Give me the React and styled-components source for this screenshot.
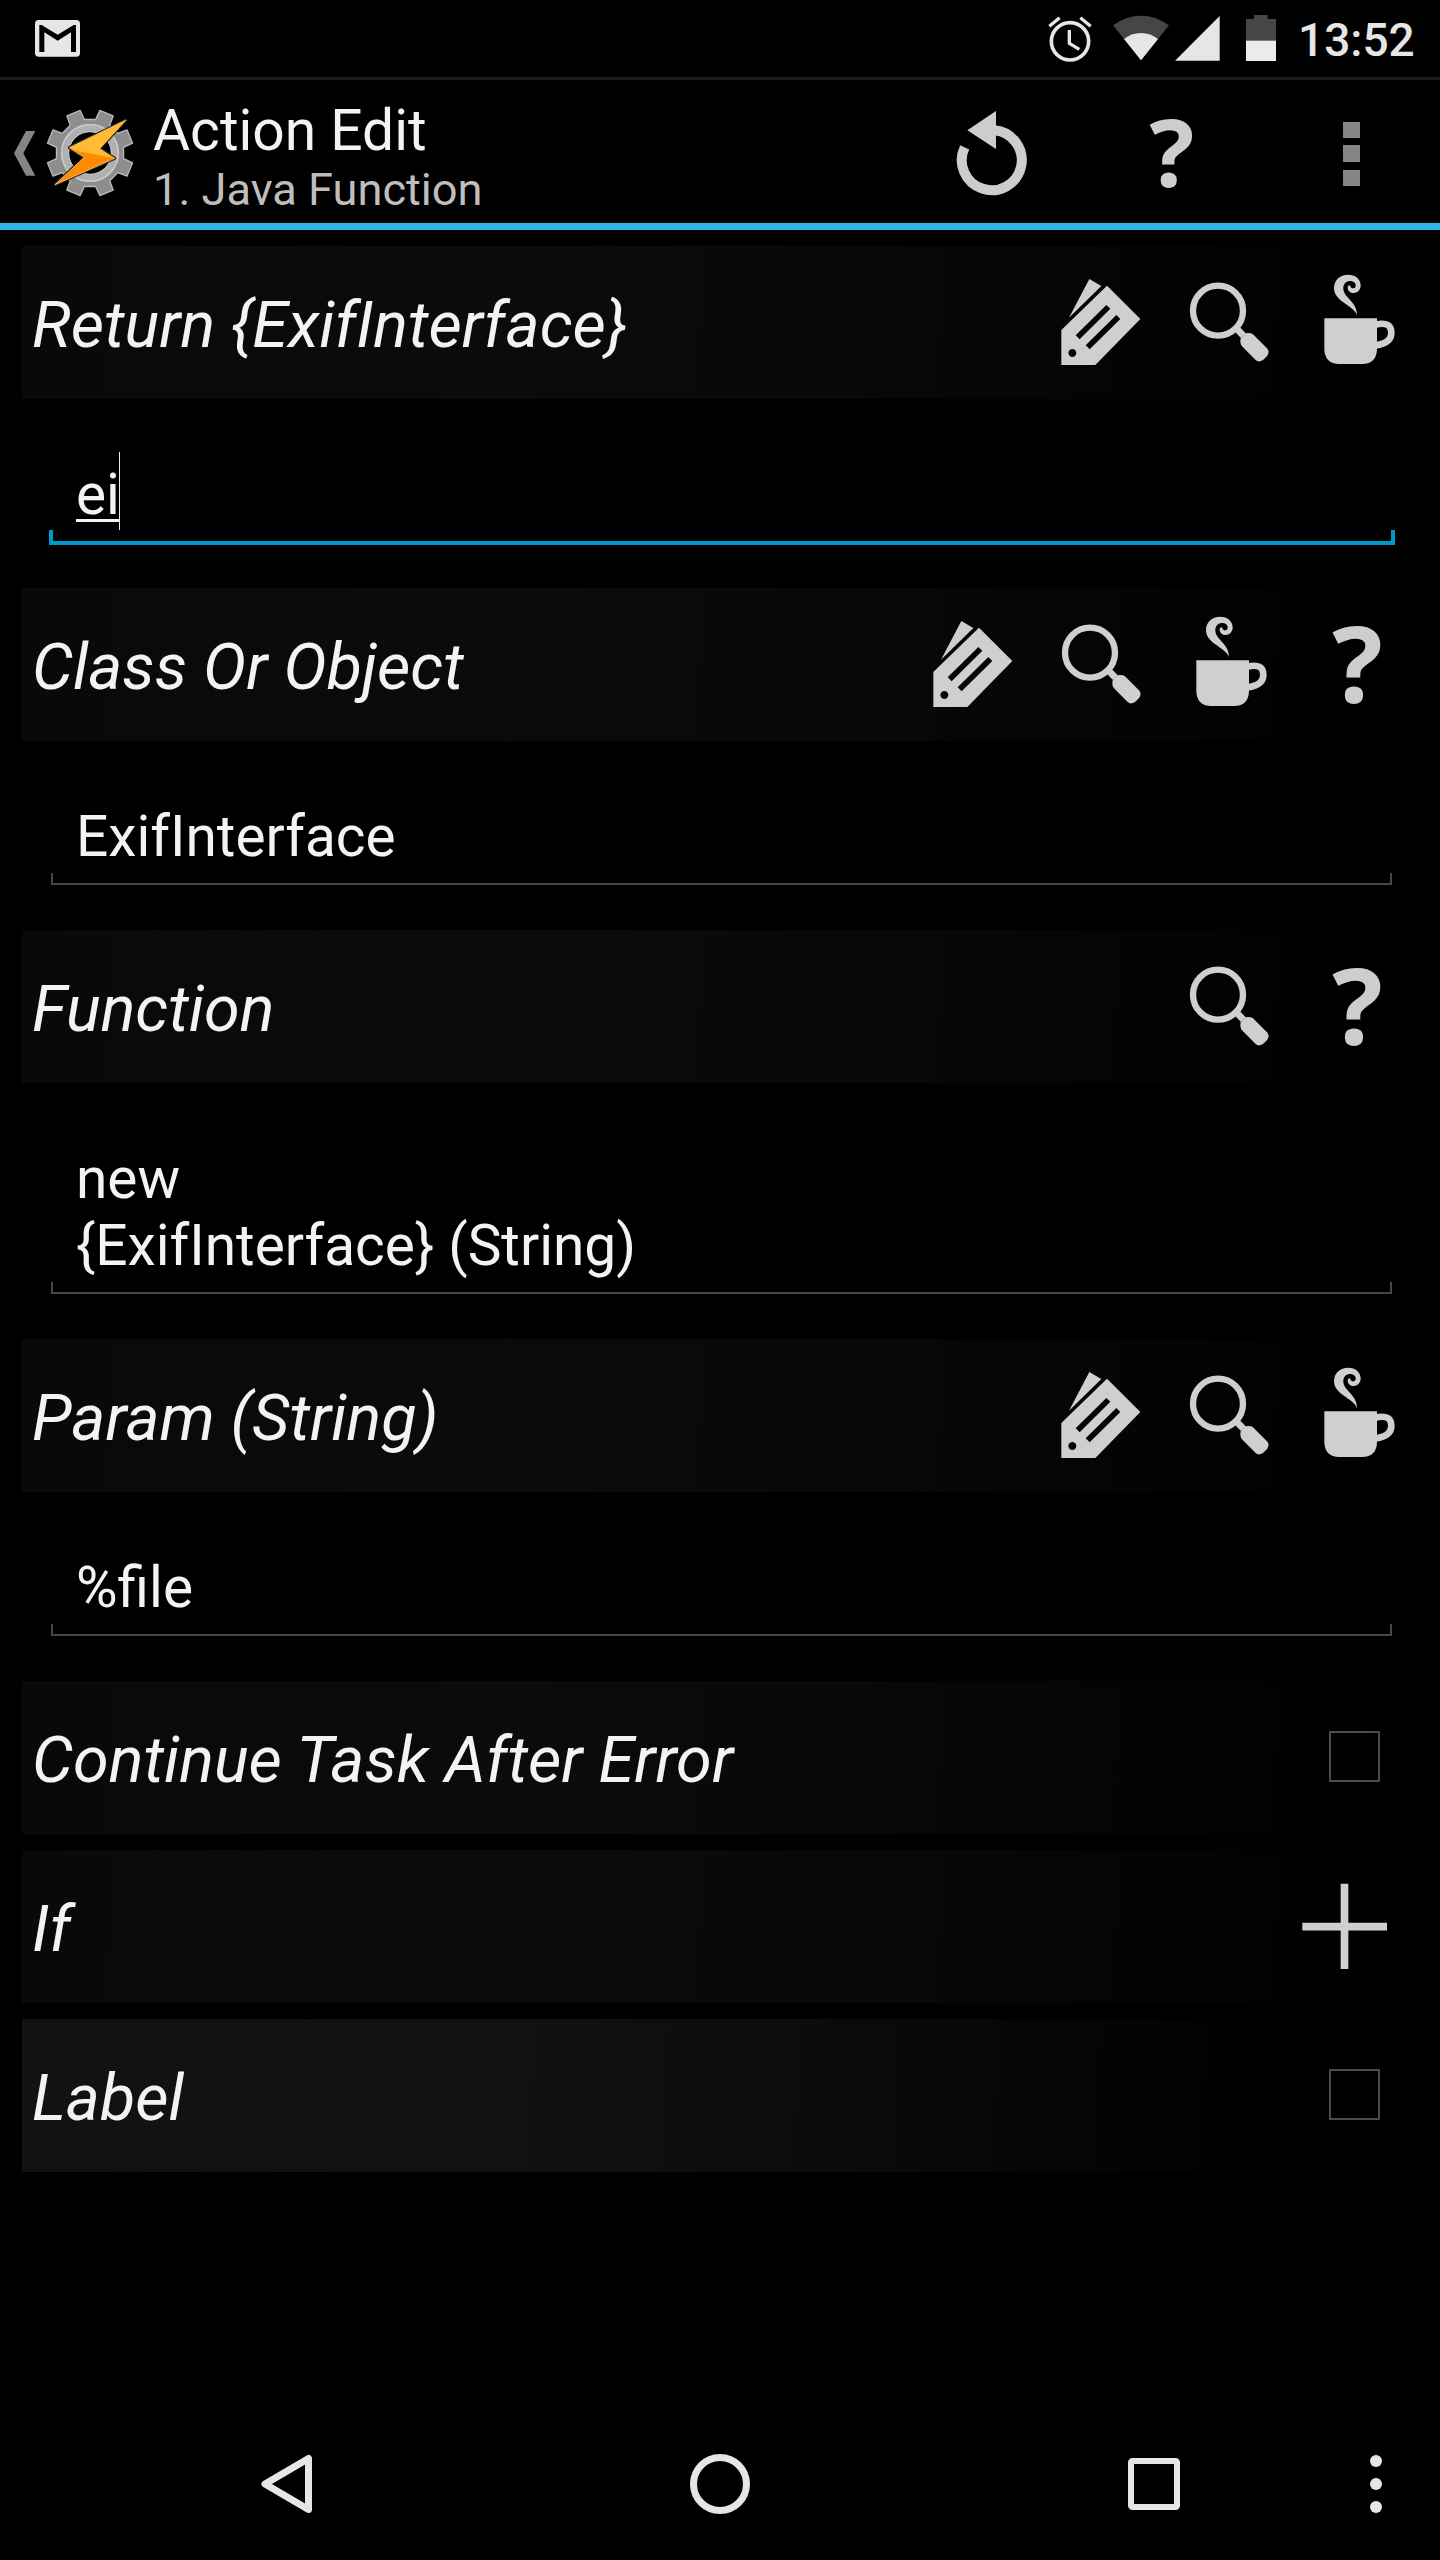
import React from "react";
import styled, { createGlobalStyle, css } from "styled-components";

const GlobalStyle = createGlobalStyle`
  * { box-sizing: border-box; }
  html, body { margin: 0; padding: 0; background: #000; }
  body { font-family: Roboto, "Noto Sans", sans-serif; color: #f3f3f3; }
`;

const Screen = styled.div`
  width: 1440px;
  height: 2560px;
  display: flex;
  flex-direction: column;
  background: #000;
  overflow: hidden;
`;

const Svg = styled.svg`
  display: block;
  flex: none;
  overflow: visible;
`;

/* Status bar */
const StatusBar = styled.div`
  height: 80px;
  flex: none;
  display: flex;
  align-items: flex-start;
  justify-content: space-between;
  border-bottom: 3px solid #1c1c1c;
`;

const StatusIcons = styled.div`
  display: flex;
  width: 392px;
`;

const Clock = styled.span`
  margin-left: -3px;
  font-size: 46px;
  font-weight: 500;
  line-height: 80px;
  color: #e6e6e6;
  white-space: nowrap;
`;

/* Action bar */
const ActionBar = styled.header`
  height: 150px;
  flex: none;
  display: flex;
  border-bottom: 7px solid #33b5e5;
`;

const Titles = styled.div`
  flex: 1;
  display: flex;
  flex-direction: column;
  padding-top: 18px;
  white-space: nowrap;
`;

const Title = styled.div`
  font-size: 56.9px;
  line-height: 66px;
  color: #f3f3f3;
`;

const Subtitle = styled.div`
  font-size: 45.2px;
  line-height: 51px;
  color: #bebebe;
`;

const ActionButton = styled.div`
  width: 180px;
  height: 143px;
  display: flex;
  align-items: center;
  justify-content: center;
`;

const Question = styled.span`
  padding-left: ${(p) => p.$nudge}px;
  padding-bottom: ${(p) => p.$lift}px;
  font-family: "Open Sans", "Noto Sans", sans-serif;
  font-weight: 700;
  font-size: ${(p) => p.$size}px;
  line-height: 1;
  color: #cdcdcd;
`;

/* Form */
const Form = styled.main`
  flex: 1;
  padding-top: 16px;
`;

const SectionHeader = styled.div`
  height: 153px;
  margin: 0 22px ${(p) => (p.$spaced ? 16 : 0)}px;
  padding-left: 10px;
  display: flex;
  justify-content: space-between;
  background: ${(p) =>
    p.$bright
      ? "linear-gradient(93deg, #121212 0%, #111 36%, #0c0c0c 55%, #060606 72%, #000 90%)"
      : "linear-gradient(93deg, #090909 0%, #0b0b0b 35%, #080808 60%, #040404 80%, #000 98%)"};
`;

const SectionTitle = styled.div`
  padding-top: 3px;
  font-size: 64.75px;
  font-style: italic;
  line-height: 153px;
  height: 153px;
  white-space: nowrap;
`;

const Tools = styled.div`
  display: flex;
`;

const Slot = styled.div`
  width: 128px;
  height: 153px;
  display: flex;
  align-items: center;
  justify-content: center;
`;

const CheckBox = styled.div`
  width: 51px;
  height: 51px;
  margin: 50px 38px 0 0;
  border: 2px solid #4c4c4c;
`;

const Field = styled.div`
  padding: 62px 45px 0 49px;
`;

const FieldText = styled.div`
  display: flex;
  padding-left: 27px;
  font-size: 56.8px;
  line-height: 67px;
  white-space: pre;
`;

const Composing = styled.span`
  height: 61px;
  border-bottom: 3px solid #f3f3f3;
`;

const Caret = styled.span`
  width: 1px;
  height: 78px;
  margin: -9px 0 -2px -1px;
  background: #e8e8e8;
`;

const UnderlineArea = styled.div`
  height: 60px;
`;

const Underline = styled.div`
  ${(p) =>
    p.$focused
      ? css`
          height: 17px;
          border: 4px solid #0099cc;
          border-width: 0 4px 4px;
          clip-path: inset(2px 0 0 0);
        `
      : css`
          height: 15px;
          margin: 0 3px 0 2px;
          border: 2px solid #474747;
          border-width: 0 2px 2px;
          clip-path: inset(3px 0 0 0);
        `}
`;

/* Navigation bar */
const NavBar = styled.nav`
  height: 152px;
  flex: none;
  display: grid;
  grid-template-columns: 433px 434px 433px 70px;
  padding-left: 70px;
  align-items: center;
  justify-items: center;
  & > :last-child { justify-self: start; }
`;

const GmailIcon = () => (
  <Svg width="120" height="77" viewBox="0 0 360 231">
    <rect x="105" y="60" width="135" height="110" rx="11" fill="#e6e6e6" />
    <path d="M118 156V75h7l48 29 48-29h7v81h-15V97l-40 25-40-25v59z" fill="#000" />
  </Svg>
);

const SystemIcons = () => (
  <Svg width="253" height="77" viewBox="384 0 759 231">
    <g fill="none" stroke="#e6e6e6" strokeWidth="11">
      <circle cx="450" cy="124" r="56" />
      <path d="M388 79L419 53M512 79L481 53M448 90V130L478 148" strokeWidth="10" />
    </g>
    <path d="M663 181L579 76Q617 47 663 47T747 76z" fill="#464646" />
    <path d="M663 181L612 117Q634 99 663 99T714 117z" fill="#e6e6e6" />
    <path d="M765 182L899 48V182z" fill="#e6e6e6" />
    <path d="M978 57H1002V45H1043V57H1068V124H978z" fill="#464646" />
    <path d="M978 122H1068V183H978z" fill="#ebebeb" />
  </Svg>
);

const polar = (radius, degrees) => {
  const a = (degrees * Math.PI) / 180;
  return `${270 + radius * Math.sin(a)},${459 - radius * Math.cos(a)}`;
};

const GEAR_POINTS = Array.from({ length: 8 }, (_, i) => {
  const mid = 22.5 + i * 45;
  return [
    polar(102, mid - 13),
    polar(131, mid - 9.5),
    polar(131, mid + 9.5),
    polar(102, mid + 13),
  ].join(" ");
}).join(" ");

const TaskerLogo = () => (
  <Svg width="153" height="143" viewBox="0 240 459 429">
    <path d="M78 393H106L70 460L106 527H78L42 460z" fill="#858585" />
    <polygon points={GEAR_POINTS} fill="#8d8d8d" stroke="#b9b9b9" strokeWidth="4" strokeLinejoin="round" />
    <circle cx="270" cy="459" r="75" fill="#000" stroke="#b0b0b0" strokeWidth="24" />
    <circle cx="270" cy="459" r="85" fill="none" stroke="#cfcfcf" strokeWidth="4" />
    <circle cx="270" cy="459" r="64" fill="none" stroke="#c6c6c6" strokeWidth="3" />
    <path d="M378 360L208 443L253 472L165 554L344 475L299 446z" fill="#ff8c00" stroke="#2a2014" strokeWidth="9" strokeLinejoin="round" />
    <path d="M378 360L208 443L253 472L165 554L344 475L299 446z" fill="#ff8c00" stroke="#ffc773" strokeWidth="2.5" />
    <path d="M376 362L209 443L234 453L338 474L299 446z" fill="#ffbb33" />
  </Svg>
);

const ReloadIcon = () => (
  <Svg width="180" height="143" viewBox="-60 240 540 429">
    <path d="M224 391A90 90 0 1 1 134 442" fill="none" stroke="#cdcdcd" strokeWidth="30" />
    <path d="M142 391L228 333V447z" fill="#cdcdcd" />
  </Svg>
);

const OverflowIcon = () => (
  <Svg width="180" height="143" viewBox="1020 240 540 429">
    <path d="M1269 366h51v48h-51zM1269 435h51v51h-51zM1269 510h51v48h-51z" fill="#858585" />
  </Svg>
);

const TagIcon = () => (
  <Svg width="128" height="153" viewBox="12 -12 384 459" fill="#cfcfcf">
    <path d="M178 87L214 108L117 203z" />
    <path
      fillRule="evenodd"
      d="M231 107L331 207L196 345H94V240zM229 165L137 256L149 268L241 176zM259 195L167 286L179 298L271 207zM127 297a12 12 0 1 0 .1 0z"
    />
  </Svg>
);

const SearchIcon = () => (
  <Svg width="128" height="153" viewBox="396 -12 384 459">
    <circle cx="564" cy="182" r="75" fill="none" stroke="#cfcfcf" strokeWidth="19" />
    <path d="M616 232L640 257" stroke="#cfcfcf" strokeWidth="20" />
    <path
      d="M646 250Q660 247 669 253L711 295Q720 305 712 317L700 329Q686 339 677 330L636 289Q629 280 632 265z"
      fill="#cfcfcf"
    />
  </Svg>
);

const CupIcon = () => (
  <Svg width="128" height="153" viewBox="780 -12 384 459" fill="#cfcfcf">
    <path d="M883 205H1041V295Q1041 342 996 342H928Q883 342 883 295z" />
    <path d="M1036 224C1070 216 1084 226 1084 248C1084 272 1066 282 1036 286" fill="none" stroke="#cfcfcf" strokeWidth="20" />
    <path d="M981 195C970 165 912 155 912 114C912 91 930 74 954 74C977 74 992 88 992 106C992 121 982 129 971 129C960 129 953 121 953 113C953 108 956 105 960 106C961 112 965 116 970 115C976 114 978 109 977 104C975 96 967 92 959 93C946 94 939 104 940 117C942 144 981 154 981 195z" />
  </Svg>
);

const HelpIcon = () => (
  <Slot>
    <Question $size={106} $nudge={7} $lift={6}>?</Question>
  </Slot>
);

const PlusIcon = () => (
  <Svg width="149" height="153" viewBox="87 510 447 459">
    <path d="M187 740H441M313.500 611V867" stroke="#cfcfcf" strokeWidth="23" />
  </Svg>
);

const TOOL_ICONS = { tag: TagIcon, search: SearchIcon, cup: CupIcon, help: HelpIcon };

const Section = ({ title, tools, lines, focused }) => (
  <section>
    <SectionHeader>
      <SectionTitle>{title}</SectionTitle>
      <Tools>
        {tools.map((name) => {
          const Icon = TOOL_ICONS[name];
          return <Icon key={name} />;
        })}
      </Tools>
    </SectionHeader>
    <Field>
      {lines.map((line) => (
        <FieldText key={line}>
          {focused ? (
            <>
              <Composing>{line}</Composing>
              <Caret />
            </>
          ) : (
            line
          )}
        </FieldText>
      ))}
      <UnderlineArea>
        <Underline $focused={focused} />
      </UnderlineArea>
    </Field>
  </section>
);

const SECTIONS = [
  { title: "Return {ExifInterface}", tools: ["tag", "search", "cup"], lines: ["ei"], focused: true },
  { title: "Class Or Object", tools: ["tag", "search", "cup", "help"], lines: ["ExifInterface"] },
  { title: "Function", tools: ["search", "help"], lines: ["new", "{ExifInterface} (String)"] },
  { title: "Param (String)", tools: ["tag", "search", "cup"], lines: ["%file"] },
];

export default function App() {
  return (
    <Screen>
      <GlobalStyle />
      <StatusBar>
        <GmailIcon />
        <StatusIcons>
          <SystemIcons />
          <Clock>13:52</Clock>
        </StatusIcons>
      </StatusBar>
      <ActionBar>
        <TaskerLogo />
        <Titles>
          <Title>Action Edit</Title>
          <Subtitle>1. Java Function</Subtitle>
        </Titles>
        <ActionButton><ReloadIcon /></ActionButton>
        <ActionButton><Question $size={94} $nudge={4} $lift={2}>?</Question></ActionButton>
        <ActionButton><OverflowIcon /></ActionButton>
      </ActionBar>
      <Form>
        {SECTIONS.map((section) => (
          <Section key={section.title} {...section} />
        ))}
        <SectionHeader $spaced>
          <SectionTitle>Continue Task After Error</SectionTitle>
          <CheckBox />
        </SectionHeader>
        <SectionHeader $spaced>
          <SectionTitle>If</SectionTitle>
          <PlusIcon />
        </SectionHeader>
        <SectionHeader $bright>
          <SectionTitle>Label</SectionTitle>
          <CheckBox />
        </SectionHeader>
      </Form>
      <NavBar>
        <Svg width="52" height="60" viewBox="0 0 52 60">
          <path d="M47.500 4.500V55.500L4 30z" fill="none" stroke="#e6e6e6" strokeWidth="7" strokeLinejoin="round" />
        </Svg>
        <Svg width="60" height="60" viewBox="0 0 60 60">
          <circle cx="30" cy="30" r="26.500" fill="none" stroke="#e6e6e6" strokeWidth="7" />
        </Svg>
        <Svg width="52" height="52" viewBox="0 0 52 52">
          <rect x="3" y="3" width="46" height="46" rx="1.500" fill="none" stroke="#e6e6e6" strokeWidth="6" />
        </Svg>
        <Svg width="12" height="58" viewBox="0 0 12 58" fill="#e6e6e6">
          <circle cx="6" cy="6" r="6" />
          <circle cx="6" cy="29" r="6" />
          <circle cx="6" cy="52" r="6" />
        </Svg>
      </NavBar>
    </Screen>
  );
}
